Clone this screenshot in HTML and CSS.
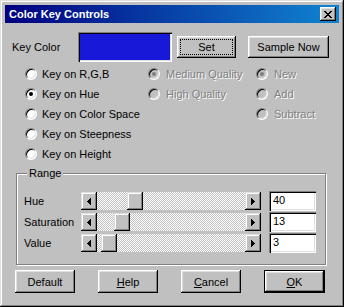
FILE: index.html
```html
<!DOCTYPE html>
<html>
<head>
<meta charset="utf-8">
<link rel="stylesheet" href="styles.css">
</head>
<body>
<div class="window">
  <div class="titlebar">
    <span class="title">Color Key Controls</span>
    <span class="close"><svg width="8" height="7" viewBox="0 0 8 7" shape-rendering="crispEdges"><path d="M0 0h2v1h-2zM6 0h2v1h-2zM1 1h2v1h-2zM5 1h2v1h-2zM2 2h4v1h-4zM3 3h2v1h-2zM2 4h4v1h-4zM1 5h2v1h-2zM5 5h2v1h-2zM0 6h2v1h-2zM6 6h2v1h-2z" fill="#000"/></svg></span>
  </div>

  <div class="keyrow">
    <span class="keylabel">Key Color</span>
    <div class="swatch"></div>
    <button class="btn btn-set"><span class="focus">Set</span></button>
    <button class="btn btn-sample">Sample Now</button>
  </div>

  <div class="options">
    <div class="col col1">
      <label class="opt"><span class="radio"></span><span>Key on R,G,B</span></label>
      <label class="opt"><span class="radio checked"></span><span>Key on Hue</span></label>
      <label class="opt"><span class="radio"></span><span>Key on Color Space</span></label>
      <label class="opt"><span class="radio"></span><span>Key on Steepness</span></label>
      <label class="opt"><span class="radio"></span><span>Key on Height</span></label>
    </div>
    <div class="col col2">
      <label class="opt disabled"><span class="radio checked"></span><span>Medium Quality</span></label>
      <label class="opt disabled"><span class="radio"></span><span>High Quality</span></label>
    </div>
    <div class="col col3">
      <label class="opt disabled"><span class="radio checked"></span><span>New</span></label>
      <label class="opt disabled"><span class="radio"></span><span>Add</span></label>
      <label class="opt disabled"><span class="radio"></span><span>Subtract</span></label>
    </div>
  </div>

  <fieldset class="range">
    <legend>Range</legend>
    <div class="srow">
      <span class="slabel">Hue</span>
      <div class="scroll">
        <span class="arrow"><svg width="4" height="7" viewBox="0 0 4 7" shape-rendering="crispEdges"><path d="M3 0h1v7h-1zM2 1h1v5h-1zM1 2h1v3h-1zM0 3h1v1h-1z" fill="#000"/></svg></span>
        <div class="track"><span class="thumb" style="margin-left:30px"></span></div>
        <span class="arrow"><svg width="4" height="7" viewBox="0 0 4 7" shape-rendering="crispEdges"><path d="M0 0h1v7h-1zM1 1h1v5h-1zM2 2h1v3h-1zM3 3h1v1h-1z" fill="#000"/></svg></span>
      </div>
      <div class="edit">40</div>
    </div>
    <div class="srow">
      <span class="slabel">Saturation</span>
      <div class="scroll">
        <span class="arrow"><svg width="4" height="7" viewBox="0 0 4 7" shape-rendering="crispEdges"><path d="M3 0h1v7h-1zM2 1h1v5h-1zM1 2h1v3h-1zM0 3h1v1h-1z" fill="#000"/></svg></span>
        <div class="track"><span class="thumb" style="margin-left:17px"></span></div>
        <span class="arrow"><svg width="4" height="7" viewBox="0 0 4 7" shape-rendering="crispEdges"><path d="M0 0h1v7h-1zM1 1h1v5h-1zM2 2h1v3h-1zM3 3h1v1h-1z" fill="#000"/></svg></span>
      </div>
      <div class="edit">13</div>
    </div>
    <div class="srow">
      <span class="slabel">Value</span>
      <div class="scroll">
        <span class="arrow"><svg width="4" height="7" viewBox="0 0 4 7" shape-rendering="crispEdges"><path d="M3 0h1v7h-1zM2 1h1v5h-1zM1 2h1v3h-1zM0 3h1v1h-1z" fill="#000"/></svg></span>
        <div class="track"><span class="thumb" style="margin-left:4px"></span></div>
        <span class="arrow"><svg width="4" height="7" viewBox="0 0 4 7" shape-rendering="crispEdges"><path d="M0 0h1v7h-1zM1 1h1v5h-1zM2 2h1v3h-1zM3 3h1v1h-1z" fill="#000"/></svg></span>
      </div>
      <div class="edit">3</div>
    </div>
  </fieldset>

  <div class="actions">
    <button class="btn btn-bottom">Default</button>
    <button class="btn btn-bottom"><u>H</u>elp</button>
    <button class="btn btn-bottom"><u>C</u>ancel</button>
    <button class="btn btn-bottom btn-default"><u>O</u>K</button>
  </div>
</div>
</body>
</html>
```

FILE: styles.css
```css
* { box-sizing: border-box; }

html, body {
  margin: 0;
  padding: 0;
  background: #c0c0c0;
}

body {
  font-family: "Liberation Sans", Arial, sans-serif;
  font-size: 11px;
  color: #000;
  white-space: nowrap;
}

.window {
  width: 344px;
  height: 307px;
  padding: 5px;
  background: #c0c0c0;
  box-shadow: inset -1px -1px #000, inset 1px 1px #dfdfdf, inset -2px -2px #808080, inset 2px 2px #fff;
  display: flex;
  flex-direction: column;
}

.titlebar {
  height: 18px;
  display: flex;
  align-items: center;
  justify-content: space-between;
  padding: 0 3px 0 4px;
  background: linear-gradient(90deg, #000080, #1084d0);
  color: #fff;
}

.title {
  font-weight: bold;
  font-size: 11px;
}

.close {
  width: 16px;
  height: 14px;
  display: flex;
  align-items: center;
  justify-content: center;
  padding-right: 1px;
  background: #c0c0c0;
  box-shadow: inset -1px -1px #000, inset 1px 1px #fff, inset -2px -2px #808080, inset 2px 2px #dfdfdf;
}

.btn {
  font-family: "Liberation Sans", Arial, sans-serif;
  font-size: 11px;
  color: #000;
  background: #c0c0c0;
  border: 0;
  padding: 0;
  margin: 0;
  box-shadow: inset -1px -1px #000, inset 1px 1px #fff, inset -2px -2px #808080, inset 2px 2px #dfdfdf;
  display: flex;
  align-items: center;
  justify-content: center;
}

.keyrow {
  display: flex;
  align-items: center;
  margin-top: 9px;
  padding-left: 7px;
  height: 30px;
}

.keylabel {
  width: 66px;
}

.swatch {
  width: 94px;
  height: 30px;
  background: #1818d8;
  box-shadow: inset 1px 1px #808080, inset 2px 2px #000, inset -1px -1px #fff, inset -2px -2px #dfdfdf;
}

.btn-set {
  width: 59px;
  height: 22px;
  margin-left: 5px;
}

.focus {
  width: 53px;
  height: 16px;
  border: 1px dotted #000;
  display: flex;
  align-items: center;
  justify-content: center;
}

.btn-sample {
  width: 81px;
  height: 22px;
  margin-left: 12px;
}

.options {
  display: flex;
  margin-top: 2px;
  padding-left: 20px;
}

.col {
  display: flex;
  flex-direction: column;
}

.col1 { width: 123px; }
.col2 { width: 108px; }

.opt {
  height: 20px;
  display: flex;
  align-items: center;
  gap: 5px;
}

.col2 .opt, .col3 .opt { gap: 6px; }

.radio {
  width: 12px;
  height: 12px;
  border-radius: 50%;
  background: #fff;
  border: 1px solid;
  border-color: #808080 #fff #fff #808080;
  box-shadow: inset 1px 1px #000, inset -1px -1px #dfdfdf;
  display: flex;
  align-items: center;
  justify-content: center;
  flex: none;
}

.radio.checked::after {
  content: "";
  width: 4px;
  height: 4px;
  border-radius: 50%;
  background: #000;
}

.disabled { color: #808080; text-shadow: 1px 1px #fff; }
.disabled .radio { background: #c0c0c0; }
.disabled .radio.checked::after { background: #808080; }

.range {
  margin: 2px 0 0 11px;
  width: 310px;
  padding: 0 0 12px 7px;
  border: 1px solid #808080;
  box-shadow: inset 1px 1px #fff, 1px 1px #fff;
  display: flex;
  flex-direction: column;
  gap: 3px;
}

.range legend {
  padding: 0 2px;
  margin-left: 3px;
  line-height: 14px;
  background: #c0c0c0;
}

.srow {
  height: 18px;
  display: flex;
  align-items: center;
}

.srow:first-of-type { margin-top: 12px; }

.slabel { width: 57px; }

.scroll {
  width: 180px;
  height: 18px;
  display: flex;
}

.arrow {
  width: 16px;
  height: 18px;
  display: flex;
  align-items: center;
  justify-content: center;
  background: #c0c0c0;
  box-shadow: inset -1px -1px #000, inset 1px 1px #dfdfdf, inset -2px -2px #808080, inset 2px 2px #fff;
  flex: none;
}

.track {
  flex: 1;
  display: flex;
  background: repeating-conic-gradient(#fff 0 25%, #c0c0c0 0 50%) 0 0 / 2px 2px;
}

.thumb {
  width: 16px;
  height: 18px;
  background: #c0c0c0;
  box-shadow: inset -1px -1px #000, inset 1px 1px #dfdfdf, inset -2px -2px #808080, inset 2px 2px #fff;
}

.edit {
  width: 47px;
  height: 20px;
  margin-left: 8px;
  padding: 3px 0 0 4px;
  background: #fff;
  box-shadow: inset 1px 1px #808080, inset 2px 2px #000, inset -1px -1px #fff, inset -2px -2px #dfdfdf;
}

.actions {
  display: flex;
  justify-content: space-between;
  margin-top: 5px;
  padding-left: 10px;
  width: 320px;
}

.btn-bottom {
  width: 60px;
  height: 23px;
}

.btn-default {
  width: 61px;
  box-shadow: inset 0 0 0 1px #000, inset -2px -2px #000, inset 2px 2px #fff, inset -3px -3px #808080, inset 3px 3px #dfdfdf;
}
```
